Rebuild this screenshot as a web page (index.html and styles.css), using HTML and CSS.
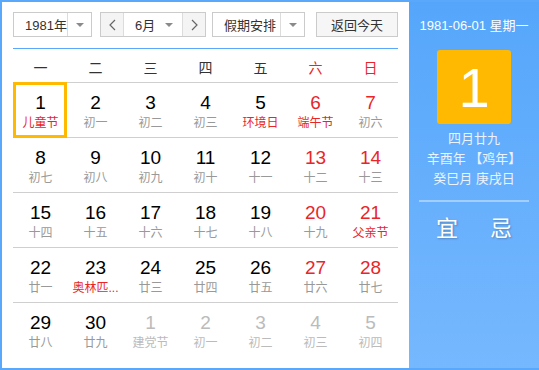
FILE: index.html
```html
<!DOCTYPE html>
<html lang="zh-CN">

<head>
    <title>万年历</title>
    <meta charset="UTF-8">
    <link rel="stylesheet" href="styles.css">
</head>

<body>
    <div class="calendar">
        <div class="cal-main">
            <div class="toolbar">
                <div class="select year-select">
                    <span class="select-text">1981年</span>
                    <span class="select-arrow"><i class="caret"></i></span>
                </div>
                <div class="select month-select">
                    <span class="step-btn">
                        <svg width="7" height="12" viewBox="0 0 7 12"><polyline points="6,1 1,6 6,11" fill="none" stroke="#666" stroke-width="1.2"/></svg>
                    </span>
                    <span class="select-text month-text">6月<i class="caret"></i></span>
                    <span class="step-btn">
                        <svg width="7" height="12" viewBox="0 0 7 12"><polyline points="1,1 6,6 1,11" fill="none" stroke="#666" stroke-width="1.2"/></svg>
                    </span>
                </div>
                <div class="select holiday-select">
                    <span class="select-text">假期安排</span>
                    <span class="select-arrow"><i class="caret"></i></span>
                </div>
                <button class="today-btn">返回今天</button>
            </div>

            <div class="week-head">
                <span>一</span>
                <span>二</span>
                <span>三</span>
                <span>四</span>
                <span>五</span>
                <span class="weekend">六</span>
                <span class="weekend">日</span>
            </div>

            <div class="days">
                <div class="week-row">
                    <div class="day selected"><b>1</b><em class="fest">儿童节</em></div>
                    <div class="day"><b>2</b><em>初一</em></div>
                    <div class="day"><b>3</b><em>初二</em></div>
                    <div class="day"><b>4</b><em>初三</em></div>
                    <div class="day"><b>5</b><em class="fest">环境日</em></div>
                    <div class="day weekend"><b>6</b><em class="fest">端午节</em></div>
                    <div class="day weekend"><b>7</b><em>初六</em></div>
                </div>
                <div class="week-row">
                    <div class="day"><b>8</b><em>初七</em></div>
                    <div class="day"><b>9</b><em>初八</em></div>
                    <div class="day"><b>10</b><em>初九</em></div>
                    <div class="day"><b>11</b><em>初十</em></div>
                    <div class="day"><b>12</b><em>十一</em></div>
                    <div class="day weekend"><b>13</b><em>十二</em></div>
                    <div class="day weekend"><b>14</b><em>十三</em></div>
                </div>
                <div class="week-row">
                    <div class="day"><b>15</b><em>十四</em></div>
                    <div class="day"><b>16</b><em>十五</em></div>
                    <div class="day"><b>17</b><em>十六</em></div>
                    <div class="day"><b>18</b><em>十七</em></div>
                    <div class="day"><b>19</b><em>十八</em></div>
                    <div class="day weekend"><b>20</b><em>十九</em></div>
                    <div class="day weekend"><b>21</b><em class="fest">父亲节</em></div>
                </div>
                <div class="week-row">
                    <div class="day"><b>22</b><em>廿一</em></div>
                    <div class="day"><b>23</b><em class="fest">奥林匹...</em></div>
                    <div class="day"><b>24</b><em>廿三</em></div>
                    <div class="day"><b>25</b><em>廿四</em></div>
                    <div class="day"><b>26</b><em>廿五</em></div>
                    <div class="day weekend"><b>27</b><em>廿六</em></div>
                    <div class="day weekend"><b>28</b><em>廿七</em></div>
                </div>
                <div class="week-row">
                    <div class="day"><b>29</b><em>廿八</em></div>
                    <div class="day"><b>30</b><em>廿九</em></div>
                    <div class="day other"><b>1</b><em>建党节</em></div>
                    <div class="day other"><b>2</b><em>初一</em></div>
                    <div class="day other"><b>3</b><em>初二</em></div>
                    <div class="day other"><b>4</b><em>初三</em></div>
                    <div class="day other"><b>5</b><em>初四</em></div>
                </div>
            </div>
        </div>

        <div class="cal-side">
            <div class="side-date">1981-06-01 星期一</div>
            <div class="side-day">1</div>
            <div class="side-lunar">
                <p>四月廿九</p>
                <p>辛酉年 【鸡年】</p>
                <p>癸巳月 庚戌日</p>
            </div>
            <div class="side-line"></div>
            <div class="side-yiji">
                <span>宜</span>
                <span>忌</span>
            </div>
        </div>
    </div>
</body>

</html>
```

FILE: styles.css
```css
body {
    margin: 0;
    background: #fff;
    font-family: "Liberation Sans", "Noto Sans CJK SC", sans-serif;
}

.calendar {
    width: 539px;
    height: 370px;
    box-sizing: border-box;
    border: 2px solid #5aa8fb;
    border-right: 0;
    display: flex;
}

.cal-main {
    width: 407px;
    box-sizing: border-box;
    padding: 10px 11px;
    background-color: #fff;
}

/* toolbar */
.toolbar {
    display: flex;
    height: 25px;
    margin-bottom: 11px;
}

.select {
    display: flex;
    height: 25px;
    box-sizing: border-box;
    border: 1px solid #cbcbcb;
    background-color: #fff;
    font-size: 13px;
    color: #333;
}

.select-text {
    flex: 1;
    display: flex;
    align-items: center;
    padding-left: 11px;
}

.select-arrow {
    width: 23px;
    display: flex;
    align-items: center;
    justify-content: center;
    border-left: 1px solid #dcdcdc;
}

.caret {
    display: block;
    width: 0;
    height: 0;
    border-left: 4px solid transparent;
    border-right: 4px solid transparent;
    border-top: 4px solid #8a8a8a;
}

.year-select {
    width: 79px;
}

.month-select {
    width: 106px;
    margin-left: 8px;
}

.step-btn {
    width: 22px;
    display: flex;
    align-items: center;
    justify-content: center;
    background-color: #f4f4f4;
}

.step-btn:first-child {
    border-right: 1px solid #dcdcdc;
}

.step-btn:last-child {
    border-left: 1px solid #dcdcdc;
}

.month-text {
    justify-content: space-between;
    padding-right: 9px;
}

.holiday-select {
    width: 93px;
    margin-left: 6px;
}

.today-btn {
    width: 82px;
    height: 25px;
    margin-left: 11px;
    padding: 0;
    border: 1px solid #cbcbcb;
    background-color: #f6f6f6;
    font-family: inherit;
    font-size: 13px;
    color: #333;
}

/* grid */
.week-head {
    display: grid;
    grid-template-columns: repeat(7, 55px);
    height: 33px;
    border-top: 1px solid #5aa8fb;
    border-bottom: 1px solid #cfcfcf;
    font-size: 14px;
    color: #333;
}

.week-head span {
    display: flex;
    align-items: center;
    justify-content: center;
    padding-top: 2px;
}

.week-head .weekend {
    color: #e8262a;
}

.week-row {
    display: grid;
    grid-template-columns: repeat(7, 55px);
    height: 55px;
    box-sizing: border-box;
    border-bottom: 1px solid #cfcfcf;
}

.week-row:last-child {
    border-bottom: 0;
}

.day {
    position: relative;
    display: flex;
    flex-direction: column;
    align-items: center;
    padding-top: 10px;
}

.day b {
    font-weight: normal;
    font-size: 19px;
    line-height: 20px;
    color: #000;
}

.day em {
    font-style: normal;
    font-size: 12px;
    line-height: 16px;
    margin-top: 2px;
    color: #999;
    white-space: nowrap;
}

.day.weekend b {
    color: #e8262a;
}

.day em.fest {
    color: #e8262a;
}

.day.other b,
.day.other em {
    color: #bbb;
}

.day.selected::after {
    content: "";
    position: absolute;
    top: -1px;
    bottom: -1px;
    left: 0;
    right: 1px;
    border: 3px solid #ffb900;
}

/* side panel */
.cal-side {
    width: 130px;
    display: flex;
    flex-direction: column;
    align-items: center;
    padding-top: 14px;
    background: linear-gradient(to bottom, #55a6fb, #76b8fe);
    color: #fff;
}

.side-date {
    font-size: 13px;
    line-height: 20px;
}

.side-day {
    width: 74px;
    height: 74px;
    margin-top: 14px;
    border-radius: 3px;
    background-color: #ffb900;
    display: flex;
    align-items: center;
    justify-content: center;
    font-size: 56px;
    color: #fff;
}

.side-lunar {
    margin-top: 5px;
    text-align: center;
    font-size: 13px;
    line-height: 20px;
    color: #eaf3ff;
}

.side-lunar p {
    margin: 0;
}

.side-line {
    width: 110px;
    height: 2px;
    margin-top: 11px;
    background-color: rgba(255, 255, 255, 0.4);
}

.side-yiji {
    display: flex;
    gap: 32px;
    margin-top: 12px;
    font-size: 22px;
    line-height: 30px;
    text-shadow: 1px 1px 2px rgba(0, 0, 0, 0.25);
}
```
